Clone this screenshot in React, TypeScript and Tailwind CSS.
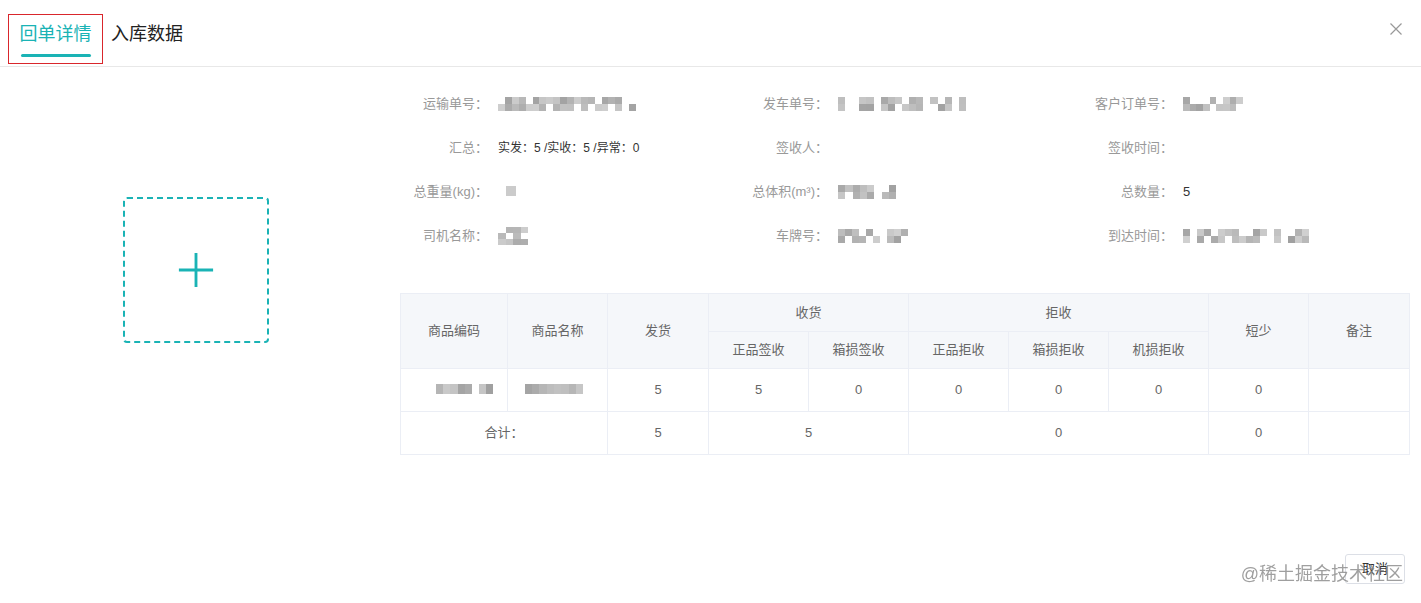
import React from "react";

const FONT = { fontFamily: '"Liberation Sans", "Noto Sans CJK SC", sans-serif' };

// 모자이크 처리된 값 (원본이 흐리게 가려져 있음)
function Mosaic({ w, h = 14, seed = 1 }: { w: number; h?: number; seed?: number }) {
  const cols = Math.max(1, Math.round(w / 7));
  const rows = Math.max(1, Math.round(h / 7));
  const cells: number[] = [];
  let s = seed * 9301 + 49297;
  for (let i = 0; i < cols * rows; i++) {
    s = (s * 9301 + 49297) % 233280;
    cells.push(s / 233280);
  }
  return (
    <span
      className="inline-grid blur-[0.6px]"
      style={{
        width: w,
        height: h,
        gridTemplateColumns: `repeat(${cols}, 1fr)`,
        gridTemplateRows: `repeat(${rows}, 1fr)`,
      }}
    >
      {cells.map((v, i) => (
        <span
          key={i}
          style={{
            backgroundColor:
              v < 0.3 ? "transparent" : `rgba(120,120,120,${(0.2 + v * 0.5).toFixed(2)})`,
          }}
        />
      ))}
    </span>
  );
}

function Field({
  label,
  children,
}: {
  label: string;
  children?: React.ReactNode;
}) {
  return (
    <div className="flex items-center h-[44px]">
      <div className="w-[88px] text-right text-[13px] text-[#999] shrink-0">{label}：</div>
      <div className="pl-[10px] text-[12px] text-[#333] flex items-center">{children}</div>
    </div>
  );
}

const th = "border border-[#ebeef5] bg-[#f5f7fa] text-[13px] text-[#666] font-normal";
const td = "border border-[#ebeef5] text-[13px] text-[#666] text-center h-[43px]";

export default function App() {
  return (
    <div className="w-[1421px] h-[603px] bg-white relative overflow-hidden" style={FONT}>
      {/* 헤더 탭 */}
      <div className="h-[67px] border-b border-[#e8e8e8] flex items-stretch px-[8px] pt-[14px] relative">
        <div className="border border-[#d9262c] w-[95px] h-[50px] flex flex-col items-center">
          <div className="text-[18px] text-[#1ab3b5] mt-[5px] leading-[28px]">回单详情</div>
          <div className="w-[70px] h-[3px] bg-[#1ab3b5] mt-[6px] rounded-full" />
        </div>
        <div className="text-[18px] text-[#222] ml-[8px] mt-[6px] leading-[28px]">入库数据</div>
        <button className="absolute right-[18px] top-[22px] w-[14px] h-[14px] text-[#999]">
          <svg viewBox="0 0 14 14" width="14" height="14" stroke="currentColor" strokeWidth="1.2">
            <path d="M1.5 1.5 L12.5 12.5 M12.5 1.5 L1.5 12.5" />
          </svg>
        </button>
      </div>

      {/* 본문 */}
      <div className="flex">
        <div className="w-[392px] flex items-center justify-center pt-[18px]">
          <div className="w-[146px] h-[146px] border-2 border-dashed border-[#1ab3b5] rounded-[4px] flex items-center justify-center">
            <svg viewBox="0 0 40 40" width="38" height="38" stroke="#1ab3b5" strokeWidth="3">
              <path d="M20 2 V38 M2 20 H38" />
            </svg>
          </div>
        </div>

        <div className="ml-[8px] w-[1009px] pt-[15px]">
          <div className="grid grid-cols-[340px_345px_1fr]">
            <Field label="运输单号"><Mosaic w={138} seed={3} /></Field>
            <Field label="发车单号"><Mosaic w={128} seed={7} /></Field>
            <Field label="客户订单号"><Mosaic w={60} seed={11} /></Field>

            <Field label="汇总">实发：5 /实收：5 /异常：0</Field>
            <Field label="签收人" />
            <Field label="签收时间" />

            <Field label="总重量(kg)"><span className="ml-[8px]"><Mosaic w={10} h={10} seed={2} /></span></Field>
            <Field label="总体积(m³)"><Mosaic w={58} seed={5} /></Field>
            <Field label="总数量"><span className="text-[13px]">5</span></Field>

            <Field label="司机名称"><Mosaic w={30} h={18} seed={9} /></Field>
            <Field label="车牌号"><Mosaic w={70} seed={13} /></Field>
            <Field label="到达时间"><Mosaic w={126} seed={17} /></Field>
          </div>

          <table className="mt-[35px] w-[1009px] border-collapse table-fixed">
            <colgroup>
              <col className="w-[107px]" />
              <col className="w-[100px]" />
              <col className="w-[101px]" />
              <col className="w-[100px]" />
              <col className="w-[100px]" />
              <col className="w-[100px]" />
              <col className="w-[100px]" />
              <col className="w-[100px]" />
              <col className="w-[100px]" />
              <col className="w-[101px]" />
            </colgroup>
            <thead>
              <tr className="h-[38px]">
                <th rowSpan={2} className={th}>商品编码</th>
                <th rowSpan={2} className={th}>商品名称</th>
                <th rowSpan={2} className={th}>发货</th>
                <th colSpan={2} className={th}>收货</th>
                <th colSpan={3} className={th}>拒收</th>
                <th rowSpan={2} className={th}>短少</th>
                <th rowSpan={2} className={th}>备注</th>
              </tr>
              <tr className="h-[37px]">
                <th className={th}>正品签收</th>
                <th className={th}>箱损签收</th>
                <th className={th}>正品拒收</th>
                <th className={th}>箱损拒收</th>
                <th className={th}>机损拒收</th>
              </tr>
            </thead>
            <tbody>
              <tr>
                <td className={td}><Mosaic w={78} h={10} seed={21} /></td>
                <td className={td}><Mosaic w={66} h={10} seed={23} /></td>
                <td className={td}>5</td>
                <td className={td}>5</td>
                <td className={td}>0</td>
                <td className={td}>0</td>
                <td className={td}>0</td>
                <td className={td}>0</td>
                <td className={td}>0</td>
                <td className={td}></td>
              </tr>
              <tr>
                <td colSpan={2} className={td}>合计：</td>
                <td className={td}>5</td>
                <td colSpan={2} className={td}>5</td>
                <td colSpan={3} className={td}>0</td>
                <td className={td}>0</td>
                <td className={td}></td>
              </tr>
            </tbody>
          </table>
        </div>
      </div>

      {/* 하단 버튼 */}
      <div className="flex justify-end mt-[99px] pr-[16px]">
        <button className="w-[60px] h-[30px] border border-[#dcdfe6] rounded-[3px] text-[13px] text-[#333] bg-white">
          取消
        </button>
      </div>

      {/* 워터마크 */}
      <div className="absolute right-[18px] bottom-[15px] text-[18px] text-[#888] opacity-80 pointer-events-none">
        @稀土掘金技术社区
      </div>
    </div>
  );
}
